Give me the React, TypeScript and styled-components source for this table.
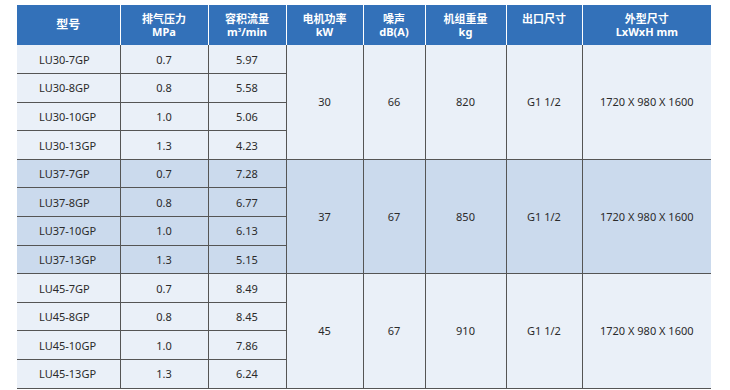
import React from 'react'
import styled, { createGlobalStyle } from 'styled-components'

const GlobalStyle = createGlobalStyle`
  html, body {
    margin: 0;
    padding: 0;
    background: #fff;
  }
  body {
    font-family: "Noto Sans", "Noto Sans CJK SC", sans-serif;
  }
`

type Group = {
  power: string
  noise: string
  weight: string
  outlet: string
  size: string
  shade: 'light' | 'dark'
  rows: [string, string, string][]
}

const groups: Group[] = [
  {
    power: '30',
    noise: '66',
    weight: '820',
    outlet: 'G1 1/2',
    size: '1720 X 980 X 1600',
    shade: 'light',
    rows: [
      ['LU30-7GP', '0.7', '5.97'],
      ['LU30-8GP', '0.8', '5.58'],
      ['LU30-10GP', '1.0', '5.06'],
      ['LU30-13GP', '1.3', '4.23'],
    ],
  },
  {
    power: '37',
    noise: '67',
    weight: '850',
    outlet: 'G1 1/2',
    size: '1720 X 980 X 1600',
    shade: 'dark',
    rows: [
      ['LU37-7GP', '0.7', '7.28'],
      ['LU37-8GP', '0.8', '6.77'],
      ['LU37-10GP', '1.0', '6.13'],
      ['LU37-13GP', '1.3', '5.15'],
    ],
  },
  {
    power: '45',
    noise: '67',
    weight: '910',
    outlet: 'G1 1/2',
    size: '1720 X 980 X 1600',
    shade: 'light',
    rows: [
      ['LU45-7GP', '0.7', '8.49'],
      ['LU45-8GP', '0.8', '8.45'],
      ['LU45-10GP', '1.0', '7.86'],
      ['LU45-13GP', '1.3', '6.24'],
    ],
  },
]

const widths = [103, 88, 78, 77, 62, 81, 76, 129]

const Wrap = styled.div`
  padding: 5px 0 0 17px;
`

const Table = styled.table`
  border-collapse: collapse;
  table-layout: fixed;
  width: 694px;
  font-size: 11px;
  color: #2b2b2b;
`

const HeadCell = styled.th<{ $big?: boolean }>`
  height: 40px;
  padding: 7px 0 0;
  box-sizing: border-box;
  vertical-align: top;
  background: #3371b9;
  color: #fff;
  font-weight: bold;
  font-size: ${(p) => (p.$big ? '12px' : '11px')};
  line-height: ${(p) => (p.$big ? '26px' : '13px')};
  text-align: center;
  border-left: 1px solid #fff;
  &:first-child {
    border-left: none;
  }
`

const Sup = styled.sup`
  font-size: 6px;
  vertical-align: 4px;
  line-height: 0;
`

const Row = styled.tr<{ $shade: 'light' | 'dark' }>`
  height: 28.6px;
  background: ${(p) => (p.$shade === 'dark' ? '#cbdaed' : '#eaf0f8')};
`

const Cell = styled.td<{ $first?: boolean }>`
  padding: 0 0 0 ${(p) => (p.$first ? '22px' : '0')};
  text-align: ${(p) => (p.$first ? 'left' : 'center')};
  vertical-align: middle;
  border-bottom: 1px solid #555;
  border-left: ${(p) => (p.$first ? 'none' : '1px solid #555')};
`

const App: React.FC = () => {
  return (
    <Wrap>
      <GlobalStyle />
      <Table>
        <colgroup>
          {widths.map((w, i) => (
            <col key={i} style={{ width: w }} />
          ))}
        </colgroup>
        <thead>
          <tr>
            <HeadCell $big>型号</HeadCell>
            <HeadCell>
              排气压力
              <br />
              MPa
            </HeadCell>
            <HeadCell>
              容积流量
              <br />
              m<Sup>3</Sup>/min
            </HeadCell>
            <HeadCell>
              电机功率
              <br />
              kW
            </HeadCell>
            <HeadCell>
              噪声
              <br />
              dB(A)
            </HeadCell>
            <HeadCell>
              机组重量
              <br />
              kg
            </HeadCell>
            <HeadCell>出口尺寸</HeadCell>
            <HeadCell>
              外型尺寸
              <br />
              LxWxH mm
            </HeadCell>
          </tr>
        </thead>
        <tbody>
          {groups.map((g) =>
            g.rows.map((r, i) => (
              <Row key={r[0]} $shade={g.shade}>
                <Cell $first>{r[0]}</Cell>
                <Cell>{r[1]}</Cell>
                <Cell>{r[2]}</Cell>
                {i === 0 && (
                  <>
                    <Cell rowSpan={4}>{g.power}</Cell>
                    <Cell rowSpan={4}>{g.noise}</Cell>
                    <Cell rowSpan={4}>{g.weight}</Cell>
                    <Cell rowSpan={4}>{g.outlet}</Cell>
                    <Cell rowSpan={4}>{g.size}</Cell>
                  </>
                )}
              </Row>
            ))
          )}
        </tbody>
      </Table>
    </Wrap>
  )
}

export default App
